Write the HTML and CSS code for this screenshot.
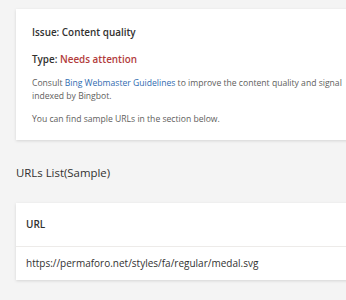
FILE: index.html
```html
<!DOCTYPE html>
<html lang="en">
<head>
    <meta charset="UTF-8">
    <meta name="viewport" content="width=device-width, initial-scale=1.0">
    <title>Content quality</title>
    <link rel="stylesheet" href="styles.css">
</head>
<body>
    <div class="page">
        <div class="card issue-card">
            <h2 class="issue-title">Issue: Content quality</h2>
            <h3 class="issue-type">Type: <span class="attention">Needs attention</span></h3>
            <p class="issue-text">Consult <a href="#">Bing Webmaster Guidelines</a> to improve the content quality and signal indexed by Bingbot.</p>
            <p class="issue-text">You can find sample URLs in the section below.</p>
        </div>

        <h2 class="section-title">URLs List(Sample)</h2>

        <div class="card url-card">
            <div class="url-head">URL</div>
            <div class="url-row">https://permaforo.net/styles/fa/regular/medal.svg</div>
        </div>
    </div>
</body>
</html>
```

FILE: styles.css
```css
html, body {
    margin: 0;
    overflow: hidden;
}
body {
    font-family: "Open Sans", "Noto Sans", sans-serif;
    background-color: #f4f4f4;
    color: #323130;
}
.page {
    width: 440px;
    padding: 9px 0 20px 16px;
}
.card {
    background-color: #fff;
    box-shadow: 0 1px 3px rgba(0, 0, 0, 0.13);
}
.issue-card {
    padding: 16px 16px 14px;
}
.issue-title {
    font-size: 9.9px;
    font-weight: 600;
    line-height: 14px;
    margin: 0 0 13px;
}
.issue-type {
    font-size: 9.9px;
    font-weight: 600;
    line-height: 14px;
    margin: 0 0 11px;
}
.attention {
    color: #b23b3b;
}
.issue-text {
    max-width: 316px;
    font-size: 8.6px;
    line-height: 13px;
    color: #605e5c;
    margin: 0 0 10px;
}
.issue-text:last-child {
    margin-bottom: 0;
}
.issue-text a {
    color: #2f6bb0;
    text-decoration: none;
}
.section-title {
    font-size: 11.4px;
    font-weight: 400;
    line-height: 16px;
    margin: 25px 0 22px;
}
.url-head {
    font-size: 10px;
    font-weight: 600;
    line-height: 14px;
    padding: 14px 10px 15px;
    border-bottom: 1px solid #edebe9;
}
.url-row {
    font-size: 10px;
    line-height: 14px;
    padding: 9px 10px 10px;
}
```
